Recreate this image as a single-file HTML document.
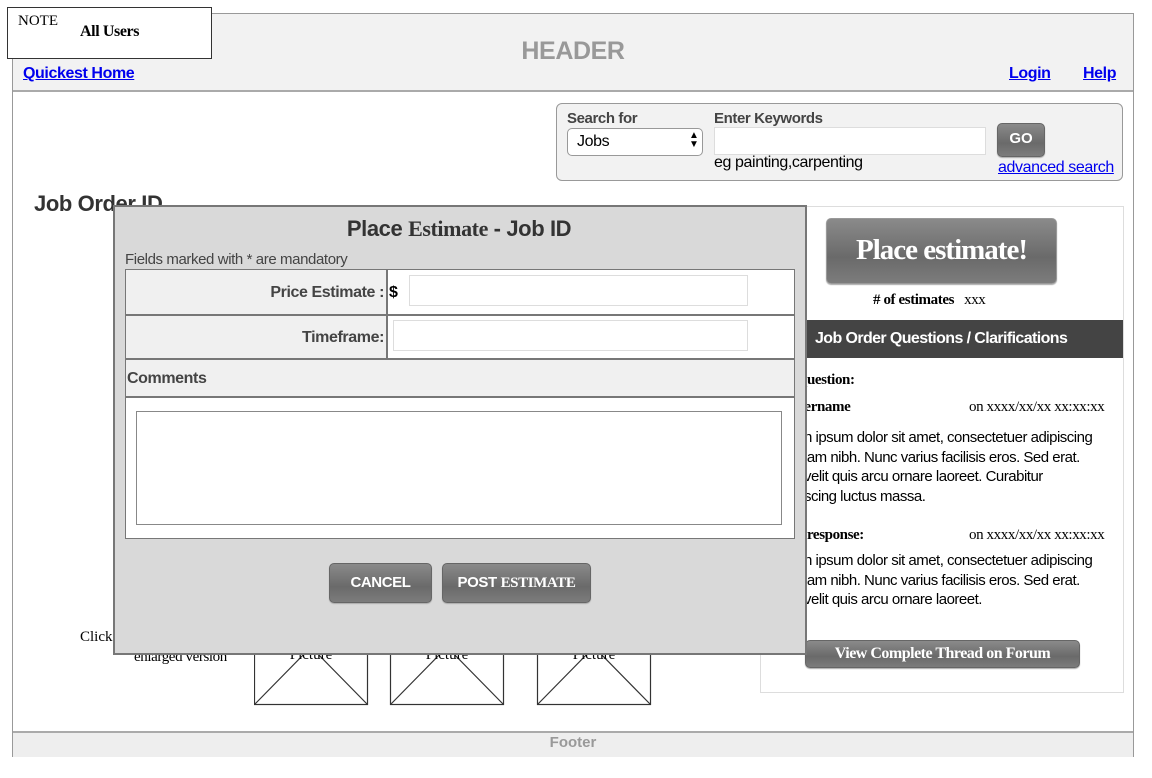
<!DOCTYPE html>
<html><head><meta charset="utf-8"><style>
body{margin:0;width:1152px;height:778px;background:#fff;position:relative;overflow:hidden;font-family:"Liberation Sans",sans-serif;}
.a{position:absolute;}
.ser{font-family:"Liberation Serif",serif;}
.c{letter-spacing:-0.4px;}
a,.lnk{color:#0000ee;text-decoration:underline;}
.btn{background:linear-gradient(#8a8a8a,#6a6a6a 60%,#7c7c7c);border:1px solid #666;border-radius:5px;color:#fff;text-align:center;box-shadow:0 1px 1px #aaa;}
</style></head><body>
<div class="a" style="left:12px;top:13px;width:1120px;height:742px;border:1px solid #999;"></div>
<div class="a" style="left:13px;top:14px;width:1120px;height:76px;background:#f2f2f2;border-bottom:2px solid #aaa;"></div>
<div class="a c" style="left:0;top:37px;width:1146px;text-align:center;font-weight:bold;font-size:25px;color:#999;">HEADER</div>
<div class="a" style="left:7px;top:7px;width:203px;height:50px;background:#fff;border:1px solid #333;"></div>
<div class="a ser" style="left:18px;top:13px;font-size:15px;">NOTE</div>
<div class="a ser c" style="left:80px;top:23px;font-size:16px;font-weight:bold;">All Users</div>
<div class="a lnk c" style="left:23px;top:65px;font-size:16px;font-weight:bold;">Quickest Home</div>
<div class="a lnk c" style="left:1009px;top:65px;font-size:16px;font-weight:bold;">Login</div>
<div class="a lnk c" style="left:1083px;top:65px;font-size:16px;font-weight:bold;">Help</div>
<div class="a" style="left:556px;top:103px;width:565px;height:76px;background:#f2f2f2;border:1px solid #999;border-radius:6px;"></div>
<div class="a c" style="left:567px;top:110px;font-size:15px;font-weight:bold;color:#444;">Search for</div>
<div class="a c" style="left:714px;top:110px;font-size:15px;font-weight:bold;color:#444;">Enter Keywords</div>
<div class="a" style="left:567px;top:128px;width:134px;height:26px;background:#fff;border:1px solid #999;border-radius:5px;"></div>
<div class="a c" style="left:577px;top:133px;font-size:16px;">Jobs</div>
<div class="a" style="left:689px;top:131px;font-size:10px;line-height:9px;">▲<br>▼</div>
<div class="a" style="left:714px;top:127px;width:270px;height:26px;background:#fff;border:1px solid #ddd;"></div>
<div class="a c" style="left:714px;top:154px;font-size:16px;">eg painting,carpenting</div>
<div class="a btn" style="left:997px;top:123px;width:46px;height:32px;line-height:30px;font-weight:bold;font-size:15px;">GO</div>
<div class="a lnk c" style="left:998px;top:159px;font-size:16px;">advanced search</div>
<div class="a c" style="left:34px;top:191px;font-size:22px;font-weight:bold;color:#333;">Job Order ID</div>
<div class="a" style="left:760px;top:206px;width:362px;height:485px;border:1px solid #ddd;background:#fff;"></div>
<div class="a btn ser" style="left:826px;top:218px;width:229px;height:64px;line-height:62px;font-size:29px;font-weight:bold;border-color:#999;letter-spacing:-1px;">Place estimate!</div>
<div class="a ser c" style="left:873px;top:292px;font-size:15px;"><b># of estimates</b>&nbsp;&nbsp;&nbsp;xxx</div>
<div class="a" style="left:760px;top:320px;width:363px;height:38px;background:#444;"></div>
<div class="a" style="left:815px;top:330px;font-size:16px;font-weight:bold;color:#fff;letter-spacing:-0.6px;">Job Order Questions / Clarifications</div>
<div class="a ser c" style="left:799px;top:372px;font-size:15px;font-weight:bold;">question:</div>
<div class="a ser c" style="left:799px;top:399px;font-size:15px;font-weight:bold;">sername</div>
<div class="a ser c" style="left:969px;top:399px;font-size:15px;">on xxxx/xx/xx xx:xx:xx</div>
<div class="a" style="left:804px;top:428px;font-size:15px;line-height:19.5px;letter-spacing:-0.5px;">n ipsum dolor sit amet, consectetuer adipiscing<br>lam nibh. Nunc varius facilisis eros. Sed erat.<br>velit quis arcu ornare laoreet. Curabitur<br>scing luctus massa.</div>
<div class="a ser c" style="left:799px;top:527px;font-size:15px;font-weight:bold;">t response:</div>
<div class="a ser c" style="left:969px;top:527px;font-size:15px;">on xxxx/xx/xx xx:xx:xx</div>
<div class="a" style="left:804px;top:551px;font-size:15px;line-height:19.5px;letter-spacing:-0.5px;">n ipsum dolor sit amet, consectetuer adipiscing<br>lam nibh. Nunc varius facilisis eros. Sed erat.<br>velit quis arcu ornare laoreet.</div>
<div class="a btn ser" style="left:805px;top:640px;width:273px;height:26px;line-height:26px;font-size:16px;font-weight:bold;letter-spacing:-0.5px;">View Complete Thread on Forum</div>
<div class="a ser" style="left:80px;top:629px;font-size:15px;">Click</div>
<div class="a ser c" style="left:134px;top:649px;font-size:15px;">enlarged version</div>
<svg class="a" style="left:254px;top:645px" width="400" height="62">
<g fill="#fff" stroke="#333" stroke-width="1.2">
<rect x="0.5" y="0.5" width="113" height="59"/><path d="M0.5 59.5 L57 2 L113.5 59.5" fill="none"/>
<rect x="136.5" y="0.5" width="113" height="59"/><path d="M136.5 59.5 L193 2 L249.5 59.5" fill="none"/>
<rect x="283.5" y="0.5" width="113" height="59"/><path d="M283.5 59.5 L340 2 L396.5 59.5" fill="none"/>
</g>
<g font-family="Liberation Serif" font-size="15" text-anchor="middle" fill="#000"><text x="57" y="14">Picture</text><text x="193" y="14">Picture</text><text x="340" y="14">Picture</text></g>
</svg>
<div class="a" style="left:13px;top:731px;width:1120px;height:24px;background:#eee;border-top:2px solid #aaa;"></div>
<div class="a" style="left:0;top:734px;width:1146px;text-align:center;font-size:15px;font-weight:bold;color:#999;">Footer</div>
<div class="a" style="left:113px;top:205px;width:690px;height:446px;background:#d9d9d9;border:2px solid #777;"></div>
<div class="a" style="left:113px;top:216px;width:692px;text-align:center;font-size:22px;font-weight:bold;color:#333;letter-spacing:-0.4px;">Place <span class="ser">Estimate</span> - Job ID</div>
<div class="a c" style="left:125px;top:251px;font-size:15px;color:#444;">Fields marked with * are mandatory</div>
<div class="a" style="left:125px;top:269px;width:668px;height:268px;border:1px solid #777;background:#fff;"></div>
<div class="a" style="left:126px;top:270px;width:260px;height:44px;background:#f0f0f0;border-right:2px solid #777;border-bottom:2px solid #777;"></div>
<div class="a" style="left:388px;top:270px;width:406px;height:44px;border-bottom:2px solid #777;"></div>
<div class="a" style="left:126px;top:316px;width:260px;height:42px;background:#f0f0f0;border-right:2px solid #777;border-bottom:2px solid #777;"></div>
<div class="a" style="left:388px;top:316px;width:406px;height:42px;border-bottom:2px solid #777;"></div>
<div class="a" style="left:126px;top:360px;width:668px;height:36px;background:#f0f0f0;border-bottom:2px solid #777;"></div>
<div class="a c" style="left:126px;top:284px;width:258px;text-align:right;font-size:16px;font-weight:bold;color:#444;">Price Estimate :</div>
<div class="a" style="left:389px;top:284px;font-size:16px;font-weight:bold;">$</div>
<div class="a" style="left:409px;top:275px;width:337px;height:29px;border:1px solid #ddd;background:#fff;"></div>
<div class="a c" style="left:126px;top:329px;width:258px;text-align:right;font-size:16px;font-weight:bold;color:#444;">Timeframe:</div>
<div class="a" style="left:393px;top:320px;width:353px;height:29px;border:1px solid #ddd;background:#fff;"></div>
<div class="a c" style="left:127px;top:370px;font-size:16px;font-weight:bold;color:#444;">Comments</div>
<div class="a" style="left:136px;top:411px;width:644px;height:112px;border:1px solid #888;background:#fff;"></div>
<div class="a btn c" style="left:329px;top:563px;width:101px;height:38px;line-height:38px;font-size:15px;font-weight:bold;">CANCEL</div>
<div class="a btn c" style="left:442px;top:563px;width:147px;height:38px;line-height:38px;font-size:15px;font-weight:bold;">POST <span class="ser">ESTIMATE</span></div>
</body></html>
